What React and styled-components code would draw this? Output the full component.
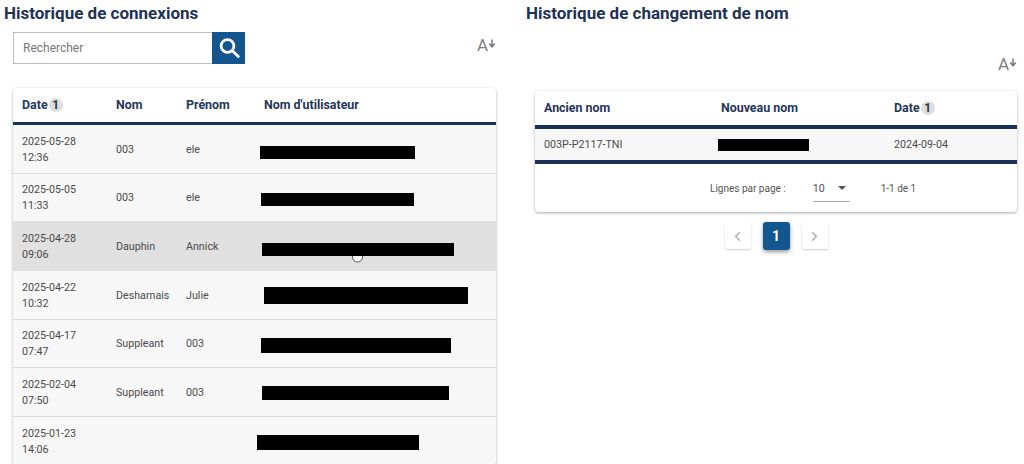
import styled, { createGlobalStyle } from "styled-components";
import { ChevronLeft, ChevronRight } from "lucide-react";

const loginRows = [
    { date: "2025-05-28", time: "12:36", nom: "003", prenom: "ele", bar: [-4, 155, 13, 5] },
    { date: "2025-05-05", time: "11:33", nom: "003", prenom: "ele", bar: [-3, 153, 13, 3] },
    { date: "2025-04-28", time: "09:06", nom: "Dauphin", prenom: "Annick", bar: [-2, 192, 13, 5], hover: true },
    { date: "2025-04-22", time: "10:32", nom: "Desharnais", prenom: "Julie", bar: [0, 204, 17, 0] },
    { date: "2025-04-17", time: "07:47", nom: "Suppleant", prenom: "003", bar: [-3, 190, 15, 2] },
    { date: "2025-02-04", time: "07:50", nom: "Suppleant", prenom: "003", bar: [-2, 187, 14, 0] },
    { date: "2025-01-23", time: "14:06", nom: "", prenom: "", bar: [-7, 162, 15, 2] },
];

function SortLetters () {
    return (
        <SortButton>
            A
            <svg width="8" height="9" viewBox="0 0 8 9" fill="none" stroke="#777" strokeWidth="1.5">
                <path d="M4 0.5v7M1.2 4.6L4 7.8l2.8-3.2" />
            </svg>
        </SortButton>
    );
}

function DateHead ({ title = "Date" }) {
    return (
        <HeadCell>
            {title}<SortBadge>1</SortBadge>
        </HeadCell>
    );
}

function App () {
    return (
        <Page>
            <GlobalStyle />
            <LeftColumn>
                <Title>Historique de connexions</Title>
                <Toolbar>
                    <SearchBox>
                        <SearchInput placeholder="Rechercher" readOnly />
                        <SearchButton>
                            <svg width="24" height="24" viewBox="0 0 24 24" fill="none" stroke="#fff" strokeWidth="2.8" strokeLinecap="round">
                                <circle cx="10.5" cy="10" r="6.4" />
                                <path d="M15.3 14.8l6 5.6" />
                            </svg>
                        </SearchButton>
                    </SearchBox>
                    <SortLetters />
                </Toolbar>
                <Card>
                    <LoginHead>
                        <DateHead />
                        <HeadCell>Nom</HeadCell>
                        <HeadCell>Prénom</HeadCell>
                        <HeadCell>Nom d'utilisateur</HeadCell>
                    </LoginHead>
                    {loginRows.map(row => (
                        <LoginRow key={row.date} $hover={row.hover}>
                            <Cell>{row.date}<br />{row.time}</Cell>
                            <Cell>{row.nom}</Cell>
                            <Cell>{row.prenom}</Cell>
                            <Cell>
                                <Redacted $left={row.bar[0]} $width={row.bar[1]} $height={row.bar[2]} $top={row.bar[3]} />
                                {row.hover && (
                                    <Pointer width="14" height="12" viewBox="0 0 14 12" fill="#fff" stroke="#555" strokeWidth="1">
                                        <path d="M1.5 1v5a5 5 0 0 0 10 0V1z" />
                                    </Pointer>
                                )}
                            </Cell>
                        </LoginRow>
                    ))}
                </Card>
            </LeftColumn>
            <RightColumn>
                <Title>Historique de changement de nom</Title>
                <RightTools>
                    <SortLetters />
                </RightTools>
                <Card>
                    <NameHead>
                        <HeadCell>Ancien nom</HeadCell>
                        <HeadCell>Nouveau nom</HeadCell>
                        <DateHead />
                    </NameHead>
                    <NameRow>
                        <Cell>003P-P2117-TNI</Cell>
                        <Cell><Redacted $left={-3} $width={91} $height={12} $top={0} /></Cell>
                        <Cell>2024-09-04</Cell>
                    </NameRow>
                    <Footer>
                        <span>Lignes par page :</span>
                        <PageSize>
                            10
                            <Caret />
                        </PageSize>
                        <span>1-1 de 1</span>
                    </Footer>
                </Card>
                <Pagination>
                    <PageButton><ChevronLeft size={15} color="#a5a5a5" /></PageButton>
                    <PageButton $active>1</PageButton>
                    <PageButton><ChevronRight size={15} color="#a5a5a5" /></PageButton>
                </Pagination>
            </RightColumn>
        </Page>
    );
}

const GlobalStyle = createGlobalStyle`
    html, body {
        margin: 0;
        height: 464px;
        overflow: hidden;
        background: #fff;
        font-family: Roboto, "Liberation Sans", sans-serif;
    }
`;
const Page = styled.div`
    display: flex;
    width: 1024px;
    height: 464px;
    overflow: hidden;
`;
const LeftColumn = styled.div`
    width: 496px;
    flex: none;
    padding-left: 4px;
    box-sizing: border-box;
`;
const RightColumn = styled.div`
    width: 491px;
    flex: none;
    margin-left: 30px;
`;
const Title = styled.h2`
    margin: 0;
    padding-top: 1px;
    height: 25px;
    font-size: 17px;
    line-height: 25px;
    font-weight: 700;
    color: #1f3354;
    white-space: nowrap;
`;
const Toolbar = styled.div`
    display: flex;
    justify-content: space-between;
    margin: 6px 0 24px 9px;
    height: 32px;
`;
const RightTools = styled.div`
    display: flex;
    justify-content: flex-end;
    margin-top: 25px;
    height: 40px;
`;
const SearchBox = styled.div`
    display: flex;
    width: 232px;
    height: 32px;
`;
const SearchInput = styled.input`
    flex: 1;
    min-width: 0;
    box-sizing: border-box;
    border: 1px solid #bdbdbd;
    border-right: 0;
    outline: none;
    padding: 0 9px;
    font: 400 12px Roboto, sans-serif;
    color: #444;

    &::placeholder {
        color: #777;
        opacity: 1;
    }
`;
const SearchButton = styled.div`
    width: 33px;
    display: flex;
    align-items: center;
    justify-content: center;
    background: #12558f;
`;
const SortButton = styled.div`
    display: flex;
    align-items: flex-start;
    height: 18px;
    font-size: 17px;
    line-height: 18px;
    color: #808080;
    margin-top: 4px;

    svg {
        margin-top: 3px;
    }
`;
const Card = styled.div`
    margin-left: 9px;
    border-radius: 4px;
    background: #fff;
    overflow: hidden;
    box-shadow: 0 1px 3px rgba(0, 0, 0, 0.35);
`;
const LoginColumns = "94px 70px 78px 1fr";
const NameColumns = "177px 173px 1fr";
const LoginHead = styled.div`
    display: grid;
    grid-template-columns: ${LoginColumns};
    align-items: center;
    height: 34px;
    padding-left: 9px;
    border-bottom: 3px solid #1b3058;
`;
const HeadCell = styled.div`
    height: 14px;
    font-size: 12.4px;
    line-height: 14px;
    font-weight: 700;
    color: #24365a;
    white-space: nowrap;
`;
const SortBadge = styled.span`
    display: inline-block;
    vertical-align: top;
    width: 14px;
    height: 14px;
    margin-left: 1px;
    border-radius: 50%;
    background: #dedede;
    font-size: 12px;
    line-height: 14px;
    text-align: center;
    color: #333;
`;
const LoginRow = styled.div`
    display: grid;
    grid-template-columns: ${LoginColumns};
    align-items: center;
    box-sizing: border-box;
    height: 48.65px;
    padding: 2px 0 0 9px;
    background: ${props => props.$hover ? "#e0e0e0" : "#f7f7f7"};
    border-bottom: 1px solid #dedede;
`;
const Cell = styled.div`
    position: relative;
    font-size: 10.7px;
    line-height: 16px;
    color: #4a4a4a;
    white-space: nowrap;
`;
const Redacted = styled.div`
    position: relative;
    z-index: 1;
    width: ${props => props.$width}px;
    height: ${props => props.$height}px;
    margin-left: ${props => props.$left}px;
    margin-top: ${props => props.$top}px;
    background: #000;
`;
const Pointer = styled.svg`
    position: absolute;
    left: 87px;
    top: 13px;
`;
const NameHead = styled.div`
    display: grid;
    grid-template-columns: ${NameColumns};
    align-items: center;
    height: 34px;
    padding-left: 9px;
    border-bottom: 4px solid #1b3058;
`;
const NameRow = styled.div`
    display: grid;
    grid-template-columns: ${NameColumns};
    align-items: center;
    height: 31px;
    padding-left: 9px;
    background: #f7f7f7;
    border-bottom: 4px solid #1b3058;
`;
const Footer = styled.div`
    display: flex;
    align-items: center;
    height: 48px;
    padding-left: 175px;
    font-size: 10px;
    color: #555;
`;
const PageSize = styled.div`
    display: flex;
    align-items: center;
    justify-content: space-between;
    width: 37px;
    height: 24px;
    margin: 4px 31px 0 27px;
    padding-bottom: 3px;
    box-sizing: border-box;
    border-bottom: 1px solid #aaa;
    font-size: 10.7px;
`;
const Caret = styled.i`
    width: 0;
    height: 0;
    margin-right: 4px;
    border-left: 4px solid transparent;
    border-right: 4px solid transparent;
    border-top: 4px solid #555;
`;
const Pagination = styled.div`
    display: flex;
    justify-content: center;
    align-items: center;
    gap: 12px;
    margin: 10px 0 0 9px;
`;
const PageButton = styled.div`
    display: flex;
    align-items: center;
    justify-content: center;
    width: ${props => props.$active ? "27px" : "26px"};
    height: ${props => props.$active ? "28px" : "26px"};
    border-radius: 3px;
    background: ${props => props.$active ? "#12558f" : "#fff"};
    color: #fff;
    font-size: 14px;
    font-weight: 700;
    box-shadow: ${props => props.$active ? "0 2px 4px rgba(0,0,0,0.4)" : "0 1px 2px rgba(0,0,0,0.2)"};
`;

export default App;
